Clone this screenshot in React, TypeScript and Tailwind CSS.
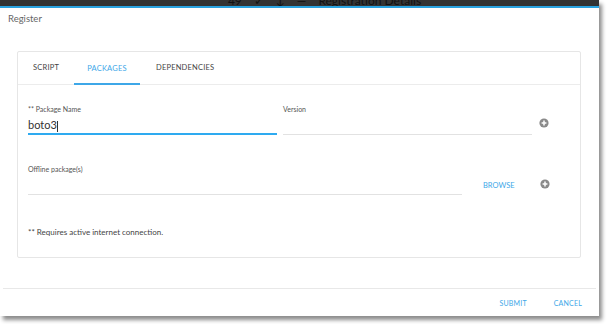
import React from "react";

function PlusCircle() {
  return (
    <svg width="10" height="10" viewBox="0 0 10 10">
      <circle cx="5" cy="5" r="4.6" fill="#8a8a8a" />
      <path d="M5 2.6v4.8M2.6 5h4.8" stroke="#fff" strokeWidth="1.5" />
    </svg>
  );
}

export default function App() {
  return (
    <div
      className="w-[608px] h-[324px] bg-white overflow-hidden"
      style={{ fontFamily: "Lato, 'Open Sans', sans-serif" }}
    >
      <div className="w-[599px] h-[316px] bg-white flex flex-col shadow-[3px_4px_4px_rgba(0,0,0,0.45)]">
        <div className="h-[6px] bg-[#333] overflow-hidden flex justify-center">
          <div className="flex gap-3 -mt-[8px] text-[12px] text-[#111] pl-[50px]">
            <span>49</span>
            <span>✓</span>
            <span>↕</span>
            <span>—</span>
            <span>Registration Details</span>
          </div>
        </div>
        <div className="h-[2px] bg-[#2aa3e0]" />
        <div className="pl-[8px] pt-[4px] text-[9.5px] text-[#666] h-[43px]">Register</div>
        <div className="mx-[17px] w-[564px] h-[207px] border border-[#e6e6e6] rounded-[2px] flex flex-col">
          <div className="flex h-[33px] border-b border-[#ececec] text-[7.5px] text-[#444] tracking-[0.2px] pl-[15px]">
            <div className="w-[41px] flex items-end pb-[11px]">SCRIPT</div>
            <div className="w-[66px] flex items-end pb-[9px] justify-center text-[#3da7e8] border-b-[2px] border-[#3da7e8] mb-[-1px]">PACKAGES</div>
            <div className="pl-[16px] flex items-end pb-[11px]">DEPENDENCIES</div>
          </div>
          <div className="flex pl-[10px] pt-[19px]">
            <div className="w-[249px] flex flex-col">
              <div className="text-[7px] text-[#555] h-[10px]">** Package Name</div>
              <div className="text-[11px] text-[#333] h-[16px] leading-[16px] mt-[3px]">boto3<span className="inline-block w-px h-[11px] bg-[#333] align-middle" /></div>
              <div className="h-[2px] bg-[#2eaaf0]" />
            </div>
            <div className="w-[249px] ml-[6px] flex flex-col">
              <div className="text-[7px] text-[#555] h-[10px]">Version</div>
              <div className="h-[20px]" />
              <div className="h-px bg-[#e2e2e2]" />
            </div>
            <div className="ml-[7px] mt-[14px]"><PlusCircle /></div>
          </div>
          <div className="flex pl-[10px] pt-[29px] items-end">
            <div className="w-[434px] flex flex-col">
              <div className="text-[7px] text-[#555] h-[10px]">Offline package(s)</div>
              <div className="h-[20px]" />
              <div className="h-px bg-[#e2e2e2]" />
            </div>
            <div className="ml-[21px] mb-[4px] text-[7.5px] text-[#3da7e8]">BROWSE</div>
            <div className="ml-[25px] mb-[6px]"><PlusCircle /></div>
          </div>
          <div className="pl-[10px] pt-[31px] text-[8px] text-[#444]">** Requires active internet connection.</div>
        </div>
        <div className="h-[30px]" />
        <div className="mx-[3px] h-px bg-[#e8e8e8]" />
        <div className="flex justify-end gap-[27px] pr-[17px] pt-[9px] text-[7px] text-[#3da7e8] tracking-[0.2px]">
          <span>SUBMIT</span>
          <span>CANCEL</span>
        </div>
      </div>
    </div>
  );
}
